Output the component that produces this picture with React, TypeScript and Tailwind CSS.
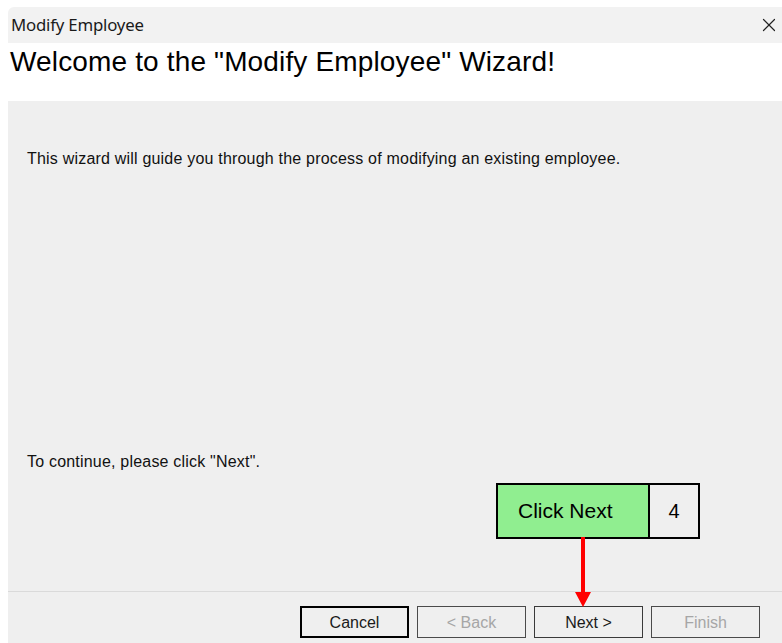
import { X } from "lucide-react";

const arial = { fontFamily: '"Liberation Sans", Arial, sans-serif' };

function WizardButton({
  label,
  kind = "normal",
}: {
  label: string;
  kind?: "normal" | "default" | "disabled";
}) {
  const cls =
    kind === "default"
      ? "border-2 border-black text-[#1a1a1a]"
      : kind === "disabled"
      ? "border border-[#4a4a4a] text-[#a6a6a6]"
      : "border border-[#3a3a3a] text-[#1a1a1a]";
  return (
    <div
      className={`w-[109px] h-[32px] flex items-center justify-center pt-[1px] bg-[#efefef] text-[16px] ${cls}`}
    >
      {label}
    </div>
  );
}

export default function App() {
  return (
    <div className="w-[782px] h-[643px] bg-white flex flex-col overflow-hidden" style={arial}>
      {/* title bar */}
      <div
        className="ml-[8px] mt-[7px] h-[36px] bg-[#f2f2f2] rounded-tl-[6px] flex items-center justify-between pl-[3px] pr-[2px] shrink-0"
        style={{ fontFamily: '"Noto Sans", "Open Sans", sans-serif' }}
      >
        <span className="text-[16.8px] text-[#1a1a1a] tracking-[-0.2px]">Modify Employee</span>
        <X size={22} strokeWidth={1.3} className="text-[#222]" />
      </div>

      {/* header */}
      <div className="h-[58px] shrink-0 pl-[10px]">
        <h1 className="text-[28px] leading-[38px] tracking-[0.15px] text-black">
          Welcome to the "Modify Employee" Wizard!
        </h1>
      </div>

      {/* body */}
      <div className="relative flex-1 ml-[8px] bg-[#efefef] flex flex-col">
        <div className="flex-1 flex flex-col justify-between px-[19px] pt-[46px] pb-[117px] text-[16px] tracking-[0.2px] text-[#111]">
          <p>This wizard will guide you through the process of modifying an existing employee.</p>
          <p>To continue, please click "Next".</p>
        </div>

        <div className="border-t border-[#dadada] h-[52px] flex items-start justify-end gap-[8px] pt-[14px] pr-[22px]">
          <WizardButton label="Cancel" kind="default" />
          <WizardButton label="< Back" kind="disabled" />
          <WizardButton label="Next >" />
          <WizardButton label="Finish" kind="disabled" />
        </div>

        {/* step callout */}
        <div className="absolute left-[488px] top-[382px] flex border-2 border-black">
          <div className="w-[152px] h-[52px] bg-[#90ee90] border-r-2 border-black flex items-center pl-[20px] text-[21px] text-black">
            Click Next
          </div>
          <div className="w-[48px] h-[52px] bg-[#efefef] flex items-center justify-center text-[20px] text-black">
            4
          </div>
        </div>
        <svg className="absolute left-[567px] top-[436px]" width="16" height="71" viewBox="0 0 16 71">
          <rect x="6" y="0" width="4" height="56" fill="#ff0000" />
          <polygon points="0,55 16,55 8,70" fill="#ff0000" />
        </svg>
      </div>
    </div>
  );
}
